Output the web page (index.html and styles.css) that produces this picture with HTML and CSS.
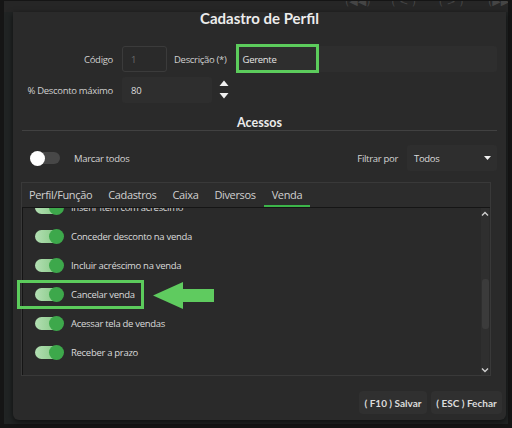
FILE: index.html
```html
<!DOCTYPE html>
<html lang="pt">
<head>
<meta charset="utf-8">
<title>Cadastro de Perfil</title>
<link rel="stylesheet" href="styles.css">
</head>
<body>
<div class="backdrop">
  <div class="topbar">
    <span class="nav n1">(◀◀)</span>
    <span class="nav n2">( &lt; )</span>
    <span class="nav n3">( &gt; )</span>
    <span class="nav n4">(▶▶)</span>
  </div>
  <div class="dialog">
    <div class="title">Cadastro de Perfil</div>

    <div class="row row1">
      <span class="lbl">Código</span>
      <div class="inp code">1</div>
      <span class="lbl2">Descrição (*)</span>
      <div class="inp desc">Gerente<div class="hl hl-desc"></div></div>
    </div>

    <div class="row row2">
      <span class="lbl">% Desconto máximo</span>
      <div class="inp num">80</div>
      <svg class="spin" width="10" height="20" viewBox="0 0 10 20">
        <polygon points="0.5,6 5,0.5 9.5,6" fill="#f0f0f0"/>
        <polygon points="0.5,13 9.5,13 5,18.5" fill="#f0f0f0"/>
      </svg>
    </div>

    <div class="sect">Acessos</div>

    <div class="row row3">
      <span class="tgl off"><span class="knob"></span></span>
      <span class="tlabel">Marcar todos</span>
      <span class="flt">Filtrar por</span>
      <div class="inp sel"><span>Todos</span>
        <svg width="7" height="4" viewBox="0 0 7 4"><polygon points="0,0 7,0 3.5,4" fill="#f0f0f0"/></svg>
      </div>
    </div>

    <div class="panel">
      <div class="tabs">
        <span class="tab">Perfil/Função</span>
        <span class="tab">Cadastros</span>
        <span class="tab">Caixa</span>
        <span class="tab">Diversos</span>
        <span class="tab active">Venda</span>
      </div>
      <div class="list">
        <div class="items">
          <div class="item"><span class="tgl on"><span class="knob"></span></span><span class="itxt">Inserir item com acréscimo</span></div>
          <div class="item"><span class="tgl on"><span class="knob"></span></span><span class="itxt">Conceder desconto na venda</span></div>
          <div class="item"><span class="tgl on"><span class="knob"></span></span><span class="itxt">Incluir acréscimo na venda</span></div>
          <div class="item"><span class="tgl on"><span class="knob"></span></span><span class="itxt">Cancelar venda</span></div>
          <div class="item"><span class="tgl on"><span class="knob"></span></span><span class="itxt">Acessar tela de vendas</span></div>
          <div class="item"><span class="tgl on"><span class="knob"></span></span><span class="itxt">Receber a prazo</span></div>
        </div>
        <div class="scroll">
          <svg class="chev" width="8" height="5" viewBox="0 0 8 5"><polyline points="1,4.5 4,1.5 7,4.5" fill="none" stroke="#cfcfcf" stroke-width="1.4"/></svg>
          <div class="thumb"></div>
          <svg class="chev down" width="8" height="5" viewBox="0 0 8 5"><polyline points="1,0.5 4,3.5 7,0.5" fill="none" stroke="#cfcfcf" stroke-width="1.4"/></svg>
        </div>
      </div>
    </div>

    <div class="btns">
      <button class="btn b1">( F10 ) Salvar</button>
      <button class="btn b2">( ESC ) Fechar</button>
    </div>

    <div class="hl hl-cancel"></div>
    <svg class="arrow" width="61" height="27" viewBox="0 0 61 27">
      <polygon points="0,13.5 30,0 30,7 61,7 61,20 30,20 30,27" fill="#5fcb5f"/>
    </svg>
  </div>
</div>
</body>
</html>
```
FILE: styles.css
```css
* { box-sizing: border-box; }
html, body { margin: 0; padding: 0; }
body {
  width: 512px;
  height: 428px;
  overflow: hidden;
  background: #151515;
  font-family: "Open Sans", "Noto Sans", sans-serif;
  color: #d2d2d2;
  letter-spacing: -0.3px;
}
.backdrop {
  margin: 1px 4px 0;
  height: 423px;
  background: #212424;
}
.topbar {
  height: 11px;
  background: #262626;
  overflow: hidden;
  display: flex;
  font-family: "DejaVu Sans", sans-serif;
  font-size: 11px;
  letter-spacing: 0;
  color: #454545;
}
.nav { margin-top: -5px; line-height: 12px; white-space: nowrap; }
.n1 { margin-left: 341px; width: 47px; }
.n2 { width: 48px; }
.n3 { width: 50px; }
.n4 { width: 20px; }

.dialog {
  position: relative;
  margin-left: 9px;
  width: 493px;
  height: 408px;
  background: #2a2a2a;
  border-radius: 0 0 6px 6px;
  box-shadow: 0 2px 6px rgba(0,0,0,0.6);
}
.title {
  height: 12px;
  line-height: 12px;
  text-align: center;
  font-family: Lato, "Open Sans", sans-serif;
  letter-spacing: 0;
  font-weight: 700;
  font-size: 15px;
  color: #ececec;
}
.row { display: flex; align-items: center; height: 26px; }
.row1 { margin-top: 22px; }
.row2 { margin-top: 5px; }
.lbl {
  width: 100px;
  margin-right: 9px;
  text-align: right;
  font-size: 9.5px;
  color: #d0d0d0;
  white-space: nowrap;
}
.lbl2 { margin: 0 9px 0 7px; font-size: 9.5px; color: #d0d0d0; white-space: nowrap; }
.inp {
  height: 26px;
  border-radius: 3px;
  font-size: 9.5px;
  display: flex;
  align-items: center;
}
.code {
  width: 45px;
  border: 1px solid #3b3b3b;
  padding-left: 8px;
  color: #6a6a6a;
}
.desc {
  position: relative;
  flex: 1;
  margin-right: 9px;
  background: #2e2e2e;
  padding-left: 7px;
  color: #e4e4e4;
}
.num {
  width: 90px;
  background: #2e2e2e;
  padding-left: 9px;
  color: #dcdcdc;
}
.spin { margin-left: 7px; }
.hl {
  position: absolute;
  border: 3px solid #5ccc5c;
}
.hl-desc { left: 0; top: -2px; width: 83px; height: 29px; }
.hl-cancel { left: 4px; top: 268px; width: 127px; height: 29px; }
.arrow { position: absolute; left: 140px; top: 270px; }

.sect {
  margin: 13px 9px 0;
  height: 15px;
  line-height: 14px;
  border-bottom: 1px solid #414141;
  text-align: center;
  font-family: Lato, "Open Sans", sans-serif;
  letter-spacing: 0;
  font-weight: 700;
  font-size: 12.5px;
  color: #ececec;
}
.row3 { margin-top: 14px; padding-left: 17px; }
.tgl {
  position: relative;
  display: inline-block;
  border-radius: 7px;
}
.tgl .knob {
  position: absolute;
  top: 50%;
  width: 15px;
  height: 15px;
  margin-top: -7.5px;
  border-radius: 50%;
}
.tgl.off { width: 30px; height: 12px; background: #474747; }
.tgl.off .knob { left: 0; background: #ffffff; }
.tgl.on {
  width: 27px;
  height: 13px;
  background: linear-gradient(90deg, #b3dfb3, #7cc47c);
}
.tgl.on .knob { right: -2px; background: #3da84b; }
.tlabel { margin-left: 14px; font-size: 9.5px; color: #d4d4d4; }
.flt { margin-left: auto; margin-right: 9px; font-size: 9.5px; color: #d4d4d4; }
.sel {
  width: 90px;
  margin-right: 9px;
  background: #2e2e2e;
  padding: 0 6px 0 7px;
  justify-content: space-between;
  color: #dcdcdc;
}

.panel {
  margin: 11px 0 0 8px;
  width: 470px;
  height: 194px;
  border: 1px solid #393939;
  display: flex;
  flex-direction: column;
}
.tabs {
  height: 24px;
  display: flex;
  background: #2c2c2c;
}
.tab {
  padding: 0 8px;
  font-size: 11px;
  letter-spacing: -0.35px;
  line-height: 24px;
  color: #d0d0d0;
  white-space: nowrap;
}
.tab:first-child { padding-left: 7px; }
.tab.active { box-shadow: inset 0 -2px 0 #3cb54a; }
.list {
  flex: 1;
  display: flex;
  overflow: hidden;
  border-top: 1px solid #151515;
  border-left: 1px solid #151515;
  background: #2a2a2a;
}
.items { flex: 1; margin-top: -15px; }
.item {
  height: 29px;
  display: flex;
  align-items: center;
  padding-left: 12px;
}
.itxt { margin-left: 9px; font-size: 9.5px; color: #dadada; white-space: nowrap; }
.scroll {
  width: 8px;
  margin-right: 1px;
  background: #2f2f2f;
  display: flex;
  flex-direction: column;
  align-items: center;
  padding-top: 3px;
}
.thumb {
  margin-top: 63px;
  width: 7px;
  height: 50px;
  border-radius: 3px;
  background: #3b3b3b;
}
.chev.down { margin-top: 39px; }

.btns {
  display: flex;
  justify-content: flex-end;
  gap: 4px;
  margin: 15px 4px 0 0;
}
.btn {
  height: 23px;
  border: none;
  border-radius: 4px;
  background: #303030;
  color: #dcdcdc;
  font-family: Lato, "Open Sans", sans-serif;
  letter-spacing: 0;
  font-weight: 700;
  font-size: 10px;
  padding: 0;
}
.b1 { width: 68px; }
.b2 { width: 71px; }
```
